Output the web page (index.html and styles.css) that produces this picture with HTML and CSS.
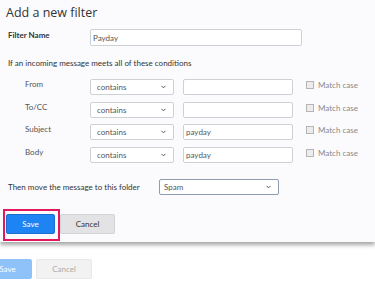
FILE: index.html
```html
<!DOCTYPE html>
<html lang="en">
<head>
  <meta charset="UTF-8" />
  <title>Add a new filter</title>
  <link rel="stylesheet" href="styles.css">
</head>
<body>

  <!-- Filter dialog -->
  <div class="panel">
    <h1 class="title">Add a new filter</h1>

    <div class="name-row">
      <label class="name-label">Filter Name</label>
      <div class="field name-field">Payday</div>
    </div>

    <p class="intro">If an incoming message meets all of these conditions</p>

    <div class="conditions">
      <div class="cond-label">From</div>
      <div class="field select">contains<svg class="chev" viewBox="0 0 6 4"><polyline points="0.6,0.6 3,3 5.4,0.6" /></svg></div>
      <div class="field text-field"></div>
      <div class="match"><span class="box"></span>Match case</div>

      <div class="cond-label">To/CC</div>
      <div class="field select">contains<svg class="chev" viewBox="0 0 6 4"><polyline points="0.6,0.6 3,3 5.4,0.6" /></svg></div>
      <div class="field text-field"></div>
      <div class="match"><span class="box"></span>Match case</div>

      <div class="cond-label">Subject</div>
      <div class="field select">contains<svg class="chev" viewBox="0 0 6 4"><polyline points="0.6,0.6 3,3 5.4,0.6" /></svg></div>
      <div class="field text-field">payday</div>
      <div class="match"><span class="box"></span>Match case</div>

      <div class="cond-label">Body</div>
      <div class="field select">contains<svg class="chev" viewBox="0 0 6 4"><polyline points="0.6,0.6 3,3 5.4,0.6" /></svg></div>
      <div class="field text-field">payday</div>
      <div class="match"><span class="box"></span>Match case</div>
    </div>

    <div class="folder-row">
      <span class="folder-label">Then move the message to this folder</span>
      <div class="field select folder-select">Spam<svg class="chev" viewBox="0 0 6 4"><polyline points="0.6,0.6 3,3 5.4,0.6" /></svg></div>
    </div>

    <div class="actions">
      <div class="highlight">
        <button class="btn btn-save">Save</button>
      </div>
      <button class="btn btn-cancel">Cancel</button>
    </div>
  </div>

  <!-- Buttons behind the dialog -->
  <div class="ghost-actions">
    <button class="btn btn-save ghost">Save</button>
    <button class="btn btn-cancel ghost">Cancel</button>
  </div>

</body>
</html>
```

FILE: styles.css
```css
body {
  font-family: 'Lato', 'Open Sans', sans-serif;
  background-color: #ffffff;
  margin: 0;
  overflow: hidden;
  color: #444;
  font-size: 8px;
}

/* Dialog panel */
.panel {
  background-color: #fbfbfd;
  height: 242px;
  box-shadow: 0 3px 4px rgba(0, 0, 0, 0.35);
  overflow: hidden;
}

.title {
  font-family: 'Open Sans', sans-serif;
  font-size: 12.5px;
  font-weight: 400;
  line-height: 26px;
  margin: 0;
  padding-left: 6px;
  color: #333;
}

.field {
  background-color: #fff;
  border: 1px solid #cdd1d6;
  border-radius: 2px;
  box-sizing: border-box;
  display: flex;
  align-items: center;
  padding-left: 2px;
  color: #555;
}

.name-row {
  display: flex;
  align-items: flex-start;
  margin-top: 3px;
}

.name-label {
  width: 90px;
  padding-left: 8px;
  box-sizing: border-box;
  font-weight: 700;
  color: #333;
  line-height: 12px;
}

.name-field {
  width: 212px;
  height: 17px;
}

.intro {
  margin: 11px 0 0 8px;
  line-height: 12px;
  color: #333;
}

/* Condition rows */
.conditions {
  display: grid;
  grid-template-columns: 56px 84px 110px auto;
  column-gap: 9px;
  row-gap: 6.5px;
  margin-top: 10px;
  padding-left: 25px;
  align-items: start;
}

.cond-label {
  color: #555;
  line-height: 12px;
  margin-top: -1px;
}

.select {
  height: 16px;
  padding-left: 6px;
  justify-content: space-between;
}

.chev {
  width: 5px;
  height: 4px;
  margin-right: 7px;
  fill: none;
  stroke: #555;
  stroke-width: 1.2;
}

.text-field {
  height: 16px;
}

.match {
  display: flex;
  align-items: center;
  color: #888;
  margin-left: 4px;
  line-height: 12px;
}

.match .box {
  width: 6px;
  height: 6px;
  border: 1px solid #b5b5b5;
  background-color: #ececec;
  margin-right: 4px;
}

.folder-row {
  display: flex;
  align-items: center;
  margin-top: 16px;
  padding-left: 8px;
}

.folder-label {
  width: 151px;
  color: #333;
}

.folder-select {
  width: 120px;
  border: 1.5px solid #8d9cb0;
  padding-left: 4px;
}

/* Buttons */
.actions {
  display: flex;
  align-items: flex-start;
  margin-top: 14px;
  padding-left: 3px;
}

.highlight {
  border: 2px solid #e3185c;
  padding: 3px 3px 5px 1px;
}

.btn {
  font-family: 'Lato', 'Open Sans', sans-serif;
  font-size: 8px;
  height: 20px;
  border-radius: 2px;
  padding: 0;
  cursor: pointer;
}

.btn-save {
  width: 49px;
  background-color: #1f84f3;
  border: 1px solid #1a6fd0;
  color: #fff;
}

.btn-cancel {
  width: 55px;
  background-color: #e3e3e6;
  border: 1px solid #d3d3d6;
  color: #333;
  margin-top: 5px;
}

.ghost-actions {
  display: flex;
  gap: 4px;
  margin-top: 17px;
  margin-left: -17px;
}

.btn-save.ghost {
  background-color: #8fc2f8;
  border-color: #8fc2f8;
}

.btn-cancel.ghost {
  width: 56px;
  margin-top: 0;
  background-color: #f2f2f3;
  border-color: #e8e8ea;
  color: #aaa;
}
```
